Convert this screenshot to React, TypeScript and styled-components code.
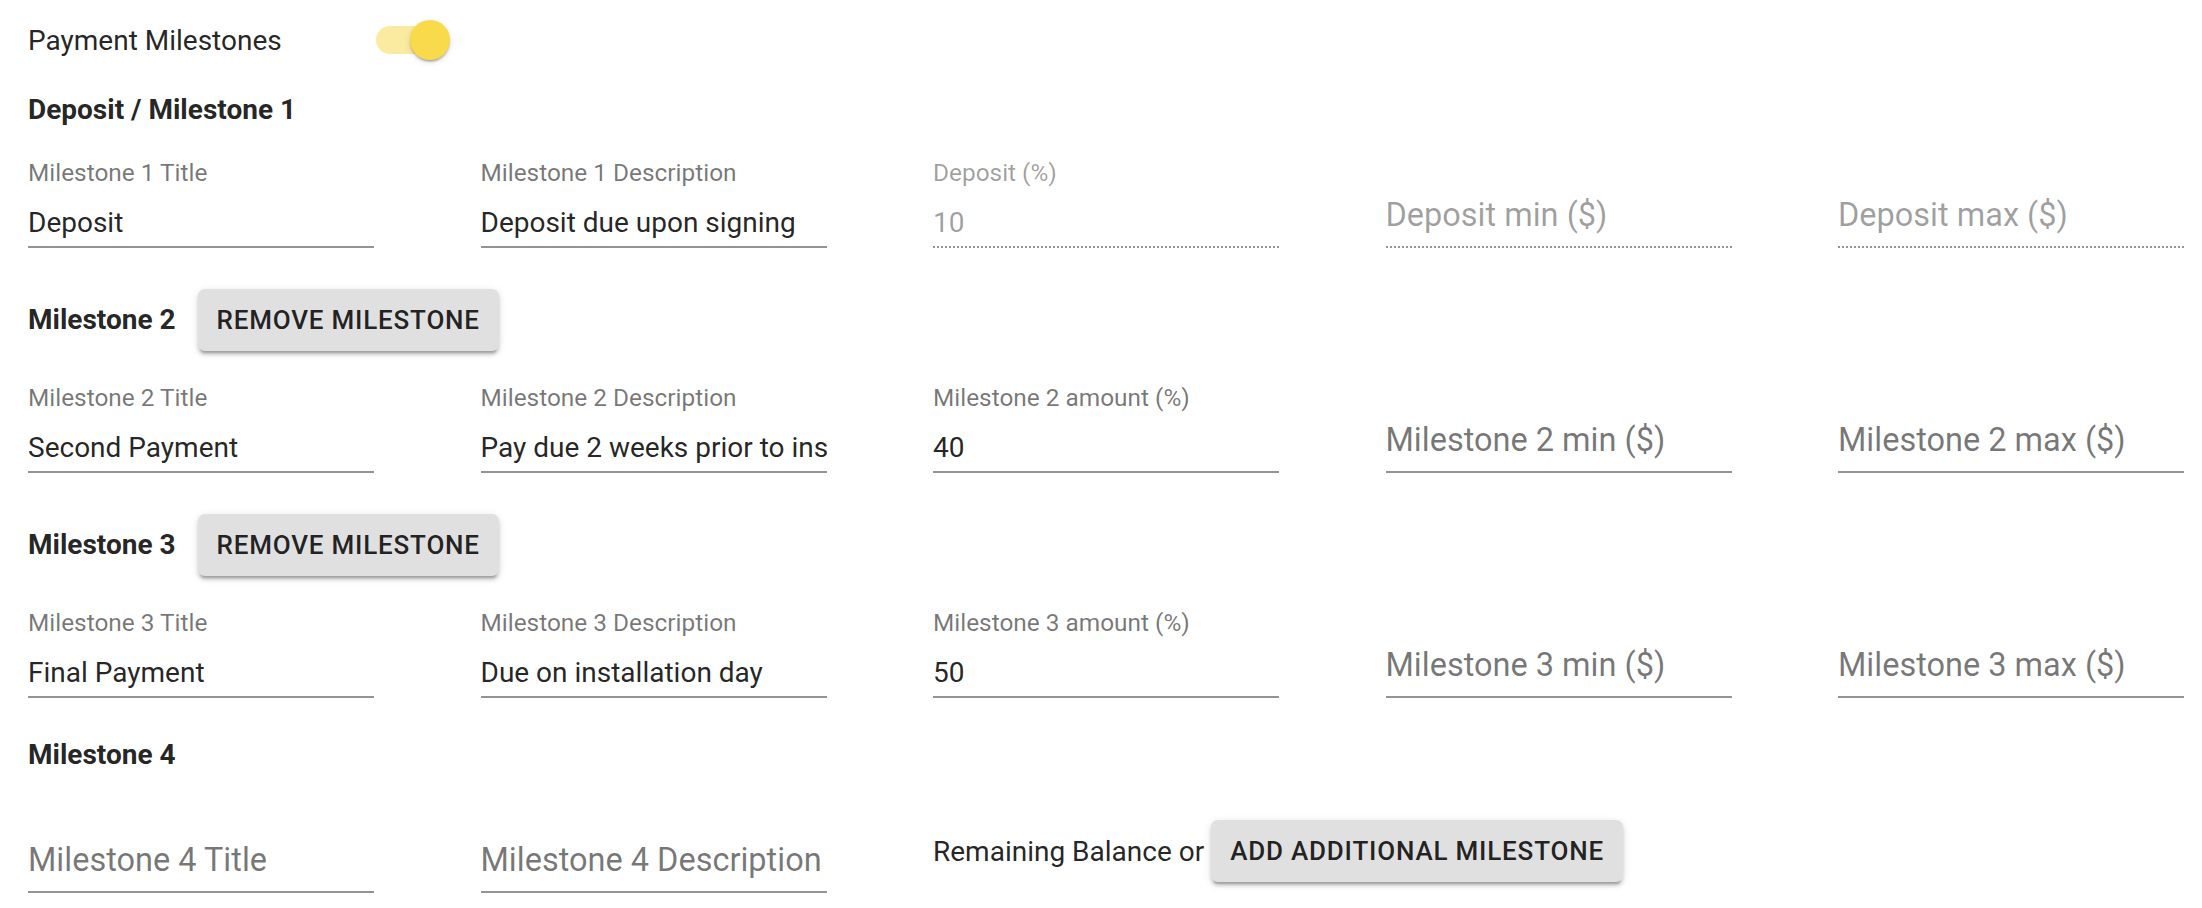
import React from 'react'
import styled, { createGlobalStyle } from 'styled-components'

interface FieldSpec {
  label: string
  value?: string
  disabled?: boolean
}

interface MilestoneSpec {
  heading: string
  removable?: boolean
  fields: FieldSpec[]
  last?: boolean
}

const milestones: MilestoneSpec[] = [
  {
    heading: 'Deposit / Milestone 1',
    fields: [
      { label: 'Milestone 1 Title', value: 'Deposit' },
      { label: 'Milestone 1 Description', value: 'Deposit due upon signing' },
      { label: 'Deposit (%)', value: '10', disabled: true },
      { label: 'Deposit min ($)', disabled: true },
      { label: 'Deposit max ($)', disabled: true },
    ],
  },
  {
    heading: 'Milestone 2',
    removable: true,
    fields: [
      { label: 'Milestone 2 Title', value: 'Second Payment' },
      { label: 'Milestone 2 Description', value: 'Pay due 2 weeks prior to installation' },
      { label: 'Milestone 2 amount (%)', value: '40' },
      { label: 'Milestone 2 min ($)' },
      { label: 'Milestone 2 max ($)' },
    ],
  },
  {
    heading: 'Milestone 3',
    removable: true,
    fields: [
      { label: 'Milestone 3 Title', value: 'Final Payment' },
      { label: 'Milestone 3 Description', value: 'Due on installation day' },
      { label: 'Milestone 3 amount (%)', value: '50' },
      { label: 'Milestone 3 min ($)' },
      { label: 'Milestone 3 max ($)' },
    ],
  },
  {
    heading: 'Milestone 4',
    last: true,
    fields: [{ label: 'Milestone 4 Title' }, { label: 'Milestone 4 Description' }],
  },
]

const Field: React.FC<FieldSpec> = ({ label, value, disabled }) => (
  <FieldWrap>
    <Label $shrink={value !== undefined} $disabled={disabled}>
      {label}
    </Label>
    <Input readOnly value={value ?? ''} disabled={disabled} />
  </FieldWrap>
)

const App: React.FC = () => (
  <>
    <GlobalStyle />
    <Page>
      <TopRow>
        <TopLabel>Payment Milestones</TopLabel>
        <SwitchTrack>
          <SwitchThumb />
        </SwitchTrack>
      </TopRow>
      {milestones.map((m) => (
        <React.Fragment key={m.heading}>
          <HeadingRow>
            <Heading>{m.heading}</Heading>
            {m.removable && <Button>Remove Milestone</Button>}
          </HeadingRow>
          <FieldRow>
            {m.fields.map((f) => (
              <Field key={f.label} {...f} />
            ))}
            {m.last && (
              <Remaining>
                <span>Remaining Balance or</span>
                <Button>Add Additional Milestone</Button>
              </Remaining>
            )}
          </FieldRow>
        </React.Fragment>
      ))}
    </Page>
  </>
)

export default App

const GlobalStyle = createGlobalStyle`
  body {
    margin: 0;
    background: #fff;
    font-family: Roboto, "Helvetica Neue", Arial, sans-serif;
    color: rgba(0, 0, 0, 0.87);
  }
`

const Page = styled.div`
  padding: 12px 28px 0;
`

const TopRow = styled.div`
  align-items: center;
  display: flex;
  height: 56px;
  margin-bottom: 26px;
`

const TopLabel = styled.span`
  font-size: 28px;
  width: 348px;
`

const SwitchTrack = styled.span`
  background: #fbeba1;
  border-radius: 14px;
  display: inline-block;
  height: 28px;
  position: relative;
  width: 68px;
`

const SwitchThumb = styled.span`
  background: #f9da4a;
  border-radius: 50%;
  box-shadow: 0 3px 2px -2px rgba(0, 0, 0, 0.2), 0 2px 2px 0 rgba(0, 0, 0, 0.14),
    0 2px 6px 0 rgba(0, 0, 0, 0.12);
  height: 40px;
  left: 34px;
  position: absolute;
  top: -6px;
  width: 40px;
`

const HeadingRow = styled.div`
  align-items: center;
  display: flex;
  gap: 22px;
  margin-bottom: 38px;
  min-height: 32px;
`

const Heading = styled.h2`
  font-size: 28px;
  font-weight: 700;
  line-height: 30px;
  margin: 0;
`

const Button = styled.button`
  background: #e0e0e0;
  border: 0 none;
  border-radius: 7px;
  box-shadow: 0 5px 2px -3.5px rgba(0, 0, 0, 0.2), 0 3.5px 3.5px 0 rgba(0, 0, 0, 0.14),
    0 2px 9px 0 rgba(0, 0, 0, 0.12);
  color: rgba(0, 0, 0, 0.87);
  font-family: Roboto, "Helvetica Neue", Arial, sans-serif;
  font-size: 26px;
  font-weight: 500;
  height: 62px;
  letter-spacing: 0.8px;
  padding: 0 19px;
  text-transform: uppercase;
  white-space: nowrap;
`

const FieldRow = styled.div`
  column-gap: 106.5px;
  display: grid;
  grid-template-columns: repeat(5, 346px);
  margin-bottom: 41px;
`

const FieldWrap = styled.div`
  position: relative;
  width: 346px;
`

const Label = styled.label<{ $shrink?: boolean; $disabled?: boolean }>`
  color: ${(p) => (p.$disabled ? 'rgba(0, 0, 0, 0.38)' : 'rgba(0, 0, 0, 0.54)')};
  font-size: ${(p) => (p.$shrink ? '24.4px' : '32.5px')};
  left: 0;
  line-height: 1;
  pointer-events: none;
  position: absolute;
  top: ${(p) => (p.$shrink ? '-3px' : '35px')};
  white-space: nowrap;
`

const Input = styled.input`
  background: transparent;
  border: 0 none;
  border-bottom: 2px solid rgba(0, 0, 0, 0.42);
  border-radius: 0;
  box-sizing: content-box;
  color: rgba(0, 0, 0, 0.87);
  display: block;
  font-family: Roboto, "Helvetica Neue", Arial, sans-serif;
  font-size: 28px;
  height: 33px;
  line-height: 33px;
  margin: 32px 0 0;
  outline: none;
  padding: 10px 0 7px;
  width: 100%;

  &:disabled {
    border-bottom-style: dotted;
    color: rgba(0, 0, 0, 0.38);
    -webkit-text-fill-color: rgba(0, 0, 0, 0.38);
    opacity: 1;
  }
`

const Remaining = styled.div`
  align-items: center;
  display: flex;
  font-size: 28px;
  gap: 7px;
  grid-column: 3 / span 3;
`
